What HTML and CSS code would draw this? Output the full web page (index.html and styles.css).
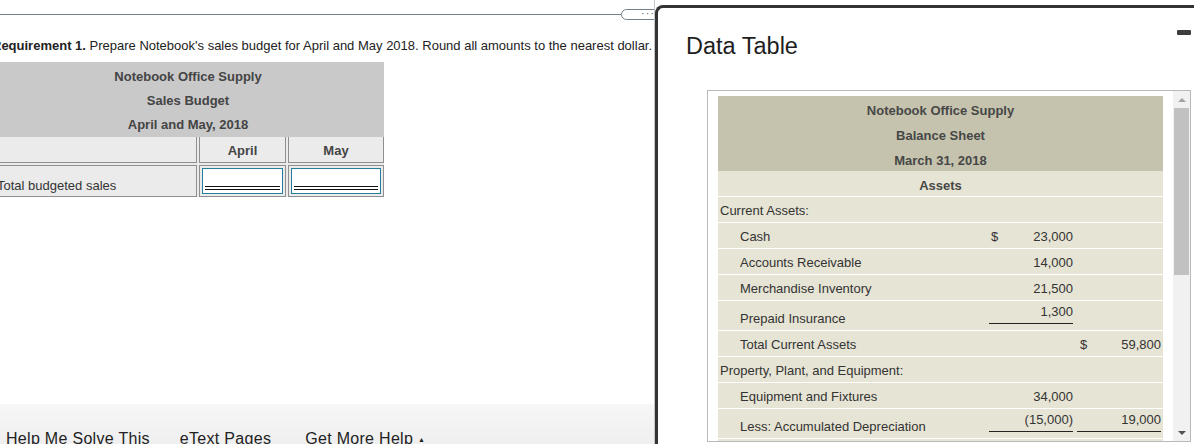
FILE: index.html
```html
<!DOCTYPE html>
<html lang="en">
<head>
  <meta charset="UTF-8">
  <meta name="viewport" content="width=device-width, initial-scale=1.0">
  <title>Sales Budget</title>
  <link rel="stylesheet" href="styles.css">
</head>
<body>
  <div class="screen">
    <div class="page">
      <div class="rule">
        <span class="rule-line"></span>
        <span class="more"><span class="dots">&middot;&middot;&middot;</span></span>
      </div>
      <p class="req"><b>Requirement 1.</b> Prepare Notebook's sales budget for April and May 2018. Round all amounts to the nearest dollar.</p>

      <div class="budget">
        <div class="budget-title">Notebook Office Supply<br>Sales Budget<br>April and May, 2018</div>
        <div class="budget-body">
          <div class="budget-row head">
            <div class="cell"></div>
            <div class="cell">April</div>
            <div class="cell">May</div>
          </div>
          <div class="budget-row">
            <div class="cell label">Total budgeted sales</div>
            <div class="cell input-cell"><div class="entry"><span class="entry-line"></span></div></div>
            <div class="cell input-cell"><div class="entry"><span class="entry-line"></span></div></div>
          </div>
        </div>
      </div>

      <div class="help-bar">
        <span class="help-link">Help Me Solve This</span>
        <span class="help-link etext">eText Pages</span>
        <span class="help-link more-help">Get More Help <span class="caret">&#9650;</span></span>
      </div>
    </div>

    <div class="dialog">
      <div class="dialog-head">
        <h1 class="dialog-title">Data Table</h1>
        <span class="minimize"></span>
      </div>
      <div class="data-box">
        <div class="data-view">
          <table class="sheet">
            <colgroup>
              <col class="c-label">
              <col class="c-amt">
              <col class="c-amt">
            </colgroup>
            <tr class="title"><td colspan="3">Notebook Office Supply</td></tr>
            <tr class="title"><td colspan="3">Balance Sheet</td></tr>
            <tr class="title"><td colspan="3">March 31, 2018</td></tr>
            <tr class="section"><td colspan="3">Assets</td></tr>
            <tr><td class="label">Current Assets:</td><td></td><td></td></tr>
            <tr class="sub"><td class="label">Cash</td><td class="amt"><span class="cur">$</span>23,000</td><td></td></tr>
            <tr class="sub"><td class="label">Accounts Receivable</td><td class="amt">14,000</td><td></td></tr>
            <tr class="sub"><td class="label">Merchandise Inventory</td><td class="amt">21,500</td><td></td></tr>
            <tr class="sub lined"><td class="label">Prepaid Insurance</td><td class="amt"><span class="ul">1,300</span></td><td></td></tr>
            <tr class="sub"><td class="label">Total Current Assets</td><td></td><td class="amt last"><span class="cur">$</span>59,800</td></tr>
            <tr><td class="label">Property, Plant, and Equipment:</td><td></td><td></td></tr>
            <tr class="sub"><td class="label">Equipment and Fixtures</td><td class="amt">34,000</td><td></td></tr>
            <tr class="sub lined"><td class="label">Less: Accumulated Depreciation</td><td class="amt"><span class="ul">(15,000)</span></td><td class="amt last"><span class="ul">19,000</span></td></tr>
            <tr><td class="label">&nbsp;</td><td></td><td></td></tr>
          </table>
        </div>
        <div class="scrollbar">
          <span class="scroll-btn"><span class="arrow-up"></span></span>
          <span class="thumb"></span>
          <span class="track"></span>
          <span class="scroll-btn"><span class="arrow-down"></span></span>
        </div>
      </div>
    </div>
  </div>
</body>
</html>
```

FILE: styles.css
```css
* {
  box-sizing: border-box;
}
body {
  margin: 0;
  font-family: "Liberation Sans", Arial, sans-serif;
  color: #222;
  background: #fff;
  overflow: hidden;
}
.screen {
  display: flex;
  width: 1194px;
  height: 444px;
  overflow: hidden;
}

/* left side: the question */
.page {
  flex: none;
  width: 663px;
  margin-left: -8px;
  display: flex;
  flex-direction: column;
  border-right: 1px solid #c8c8c8;
  overflow: hidden;
}
.rule {
  display: flex;
  align-items: center;
  height: 11px;
  margin-top: 9px;
}
.rule-line {
  flex: 1;
  height: 1px;
  background: #74808e;
}
.more {
  flex: none;
  width: 42px;
  height: 11px;
  margin-right: -9px;
  border: 1px solid #74808e;
  border-radius: 6px;
  padding-left: 19px;
  font-size: 11px;
  line-height: 7px;
  color: #5f6a76;
  letter-spacing: 1px;
}
.req {
  margin: 18px 0 0;
  font-size: 13px;
  line-height: 16px;
  white-space: nowrap;
}

.budget {
  width: 392px;
  margin-top: 8px;
  font-size: 13px;
}
.budget-title {
  padding-top: 3px;
  background: #c9c9c9;
  color: #444;
  font-weight: bold;
  text-align: center;
  line-height: 24px;
}
.budget-body {
  display: grid;
  row-gap: 2px;
  background: #ebebeb;
}
.budget-row {
  display: grid;
  grid-template-columns: 205px 87px 96px;
  column-gap: 2px;
}
.cell {
  border: 1px solid #8f8f8f;
  height: 32px;
}
.head .cell {
  border-top: 0;
  height: 26px;
  padding-top: 2px;
  line-height: 23px;
  text-align: center;
  font-weight: bold;
  color: #444;
}
.label {
  padding: 12px 0 0 4px;
  line-height: 15px;
  color: #333;
}
.input-cell {
  display: flex;
  padding: 2px;
}
.entry {
  flex: 1;
  display: flex;
  align-items: flex-end;
  padding: 0 2px 3px;
  background: #fff;
  border: 1px solid #237f9c;
}
.entry-line {
  flex: 1;
  border-bottom: 4px double #111;
}

.help-bar {
  margin-top: auto;
  height: 40px;
  padding: 25px 0 0 14px;
  display: flex;
  background: linear-gradient(#f7f7f7, #efefef);
  font-size: 16px;
  line-height: 20px;
  letter-spacing: 0.3px;
  color: #222;
}
.etext {
  margin-left: 30px;
}
.more-help {
  margin-left: 34px;
}
.caret {
  font-size: 7px;
  vertical-align: 2px;
}

/* right side: data table dialog */
.dialog {
  flex: 1;
  margin-top: 5px;
  border: 3px solid #333;
  border-right: 0;
  border-bottom: 0;
  border-top-left-radius: 8px;
  background: #fff;
}
.dialog-head {
  display: flex;
  justify-content: space-between;
  padding: 25px 3px 0 28px;
}
.dialog-title {
  margin: 0;
  font-size: 23.5px;
  font-weight: normal;
  line-height: 26px;
  color: #1e1e1e;
}
.minimize {
  width: 14px;
  height: 5px;
  margin-top: -3px;
  border-radius: 1px;
  background: #3d3d3d;
}
.data-box {
  display: flex;
  width: 484px;
  height: 352px;
  margin: 31px 0 0 49px;
  border: 1px solid #b9b9b9;
}
.data-view {
  flex: 1;
  padding: 5px 10px 0;
  overflow: hidden;
}
.sheet {
  width: 445px;
  table-layout: fixed;
  border-collapse: collapse;
  font-size: 13px;
  color: #333;
}
.c-label {
  width: 269px;
}
.c-amt {
  width: 88px;
}
.sheet td {
  padding: 6px 2px 4px;
  line-height: 15px;
  vertical-align: bottom;
  background: #e6e4d4;
  border-bottom: 1px solid #fff;
  white-space: nowrap;
}
.sheet .title td {
  padding: 7px 0 3px;
  background: #c5c3ad;
  border-bottom: 0;
  text-align: center;
  font-weight: bold;
  color: #474747;
}
.sheet .section td {
  padding: 7px 0 3px;
  text-align: center;
  font-weight: bold;
  color: #474747;
}
.sheet td.label {
  padding-left: 2px;
}
.sheet .sub td.label {
  padding-left: 22px;
}
.sheet td.amt {
  text-align: right;
}
.cur {
  float: left;
  margin-left: 2px;
}
.last .cur {
  margin-left: 3px;
}
.sheet .lined td.amt {
  vertical-align: top;
  padding-top: 3px;
  padding-bottom: 6px;
}
.ul {
  display: block;
  padding-bottom: 4px;
  border-bottom: 1px solid #222;
}

.scrollbar {
  flex: none;
  width: 17px;
  display: flex;
  flex-direction: column;
  background: #f1f1f1;
}
.scroll-btn {
  flex: none;
  height: 17px;
  display: flex;
  align-items: center;
  justify-content: center;
}
.arrow-up {
  border-left: 4px solid transparent;
  border-right: 4px solid transparent;
  border-bottom: 4px solid #a3a3a3;
}
.arrow-down {
  border-left: 4px solid transparent;
  border-right: 4px solid transparent;
  border-top: 4px solid #505050;
}
.thumb {
  flex: none;
  height: 167px;
  margin: 0 1px;
  background: #c1c1c1;
}
.track {
  flex: 1;
}
```
